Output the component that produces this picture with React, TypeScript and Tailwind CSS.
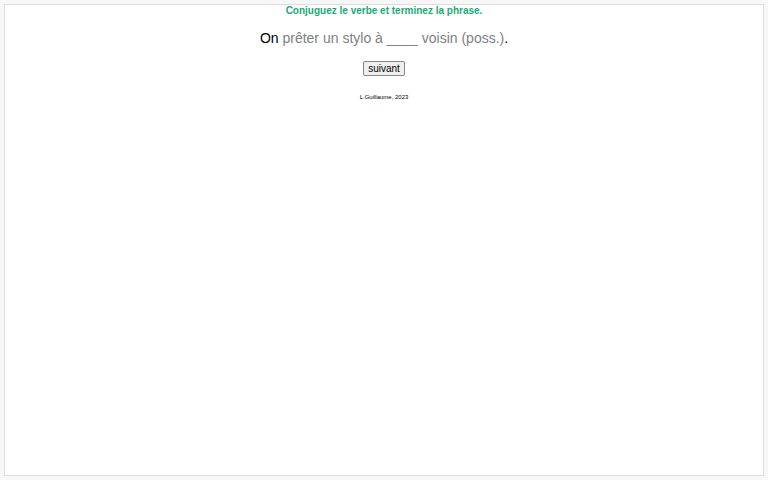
const exercise = {
  subject: "On",
  prompt: "prêter un stylo à ____ voisin (poss.)",
};

export default function App() {
  return (
    <div className="flex min-h-screen bg-[#f7f7f7] p-1 font-['Liberation_Sans',Arial,sans-serif] text-black">
      <main className="flex flex-1 flex-col items-center border border-[#dddddd] bg-white">
        <h1 className="text-[10px] leading-3 font-bold text-[#18ab72]">
          Conjuguez le verbe et terminez la phrase.
        </h1>

        {/* Sentence */}
        <p className="mt-3 text-[14px] leading-[18px]">
          {exercise.subject} <span className="text-[#808080]">{exercise.prompt}</span>.
        </p>

        <button
          type="button"
          className="mt-[14px] rounded-xs border border-[#858585] bg-[#efefef] px-1 text-[10px] leading-[13px]"
        >
          suivant
        </button>

        <footer className="mt-4 text-[6px] leading-[10px]">L.Guillaume, 2023</footer>
      </main>
    </div>
  );
}
